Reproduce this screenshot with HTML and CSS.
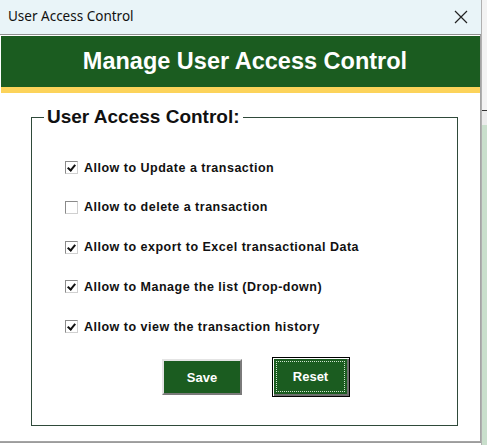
FILE: index.html
```html
<!DOCTYPE html>
<html>
<head>
<meta charset="utf-8">
<link rel="stylesheet" href="styles.css">
</head>
<body>
<div class="screen">
  <div class="window">
    <div class="titlebar">
      <span class="title">User Access Control</span>
      <svg class="close" width="14" height="14" viewBox="0 0 14 14"><path d="M1 1L13 13M13 1L1 13" stroke="#222" stroke-width="1.2" fill="none"/></svg>
    </div>
    <div class="frame">
      <div class="banner">Manage User Access Control</div>
      <div class="stripe"></div>
      <div class="body">
        <fieldset class="group">
          <legend>User Access Control:</legend>
          <div class="options">
            <label class="opt"><span class="box checked"></span>Allow to Update a transaction</label>
            <label class="opt"><span class="box"></span>Allow to delete a transaction</label>
            <label class="opt"><span class="box checked"></span>Allow to export to Excel transactional Data</label>
            <label class="opt"><span class="box checked"></span>Allow to Manage the list (Drop-down)</label>
            <label class="opt"><span class="box checked"></span>Allow to view the transaction history</label>
          </div>
          <div class="buttons">
            <button class="btn">Save</button>
            <button class="btn focus"><span>Reset</span></button>
          </div>
        </fieldset>
      </div>
    </div>
  </div>
  <div class="sheet"></div>
</div>
</body>
</html>
```
FILE: styles.css
```css
html, body { margin: 0; padding: 0; }
body { width: 487px; height: 445px; overflow: hidden; background: #fff; }
.screen { display: flex; height: 445px; }
.window { width: 481px; height: 442px; display: flex; flex-direction: column; background: #fff; border-bottom: 1px solid #9c9c9c; }
.titlebar { height: 34px; background: #e9f4f8; display: flex; align-items: center; justify-content: space-between; padding: 0 13px 0 8px; font-family: "Noto Sans", sans-serif; font-size: 13.5px; color: #111; }
.title { position: relative; top: -1px; }
.frame { flex: 1; border: 1px solid #a4a4a4; border-top: 1px solid #8f8f8f; border-left: none; padding-top: 1px; display: flex; flex-direction: column; background: #fff; }
.banner { height: 51px; background: #1b5c20; color: #fff; font-family: "Liberation Sans", Arial, sans-serif; font-weight: bold; font-size: 23.5px; display: flex; align-items: center; justify-content: center; padding-left: 9px; margin-left: 1px; }
.stripe { height: 6px; background: #fcd35a; margin-left: 1px; }
.body { flex: 1; padding: 13px 0 0 31px; }
.group { width: 427px; height: 320px; margin: 0; border: 1px solid #2f4a3a; padding: 0 0 0 12px; box-sizing: border-box; font-family: "Liberation Sans", Arial, sans-serif; }
.group legend { font-weight: bold; font-size: 19px; color: #111; padding: 0 3px; }
.options { display: flex; flex-direction: column; gap: 26.8px; padding: 33px 0 0 21px; }
.opt { display: flex; align-items: center; font-weight: bold; font-size: 12.5px; letter-spacing: 0.5px; color: #111; height: 13px; }
.box { width: 11px; height: 11px; border: 1px solid #8a8a8a; border-right-color: #d0d0d0; border-bottom-color: #d0d0d0; background: #fff; margin-right: 6px; position: relative; }
.box.checked::after { content: ""; position: absolute; left: 3px; top: 1px; width: 3px; height: 6px; border-right: 2px solid #111; border-bottom: 2px solid #111; transform: rotate(40deg); }
.buttons { display: flex; gap: 30px; padding: 24px 0 0 118px; align-items: center; }
.btn { width: 80px; height: 36px; background: #1b5c20; color: #fff; font-family: "Liberation Sans", Arial, sans-serif; font-weight: bold; font-size: 13px; border: 2px solid; border-color: #e4e4e4 #7a7a7a #7a7a7a #e4e4e4; padding: 0; }
.btn.focus { width: 78px; height: 40px; border: 1px solid #000; box-shadow: inset 1px 1px 0 #fff, inset -2px -2px 0 #6e6e6e; padding: 3px; display: flex; }
.btn.focus span { flex: 1; display: flex; align-items: center; justify-content: center; border: 1px dotted #cfe3cf; margin: 0 1px 1px 0; }
.sheet { flex: 1; background: linear-gradient(#f3f3f3 0, #f3f3f3 110px, #333 110px, #333 111px, #ececec 111px, #ececec 125px, #c9dfcc 125px); border-left: 1px solid #b0b0b0; }
```
